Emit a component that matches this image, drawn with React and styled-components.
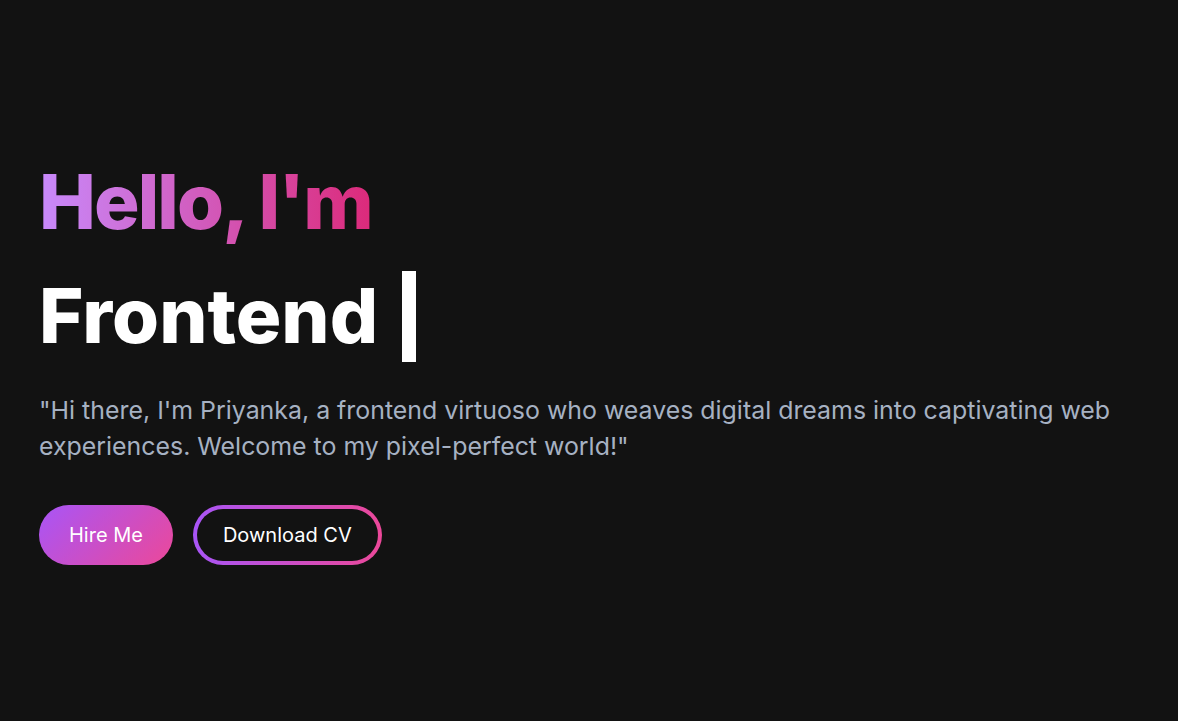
import React from 'react';
import styled, { createGlobalStyle } from 'styled-components';

const GlobalStyle = createGlobalStyle`
  * {
    box-sizing: border-box;
  }
  body {
    margin: 0;
    background: #121212;
    font-family: Inter, "Noto Sans", sans-serif;
  }
`;

const Hero = styled.section`
  min-height: 100vh;
  display: flex;
  flex-direction: column;
  justify-content: center;
  align-items: flex-start;
  padding: 0 39px;
  background: #121212;
`;

const Greeting = styled.h1`
  display: inline-block;
  margin: 0;
  font-size: 76px;
  font-weight: 800;
  letter-spacing: -0.025em;
  line-height: 1.2;
  background: linear-gradient(90deg, #c88afc, #dc2a7a);
  -webkit-background-clip: text;
  background-clip: text;
  color: transparent;
`;

const Role = styled.h2`
  display: flex;
  align-items: center;
  gap: 24px;
  margin: 21px 0 0;
  font-size: 76px;
  font-weight: 800;
  line-height: 1.2;
  color: #ffffff;
`;

/* typewriter caret */
const Cursor = styled.span`
  display: block;
  width: 14px;
  height: 91px;
  margin-top: 2px;
  background: #ffffff;
`;

const Intro = styled.p`
  margin: 30px 0 0;
  max-width: 1100px;
  font-size: 24.9px;
  line-height: 36px;
  color: #a6b1c2;
`;

const Actions = styled.div`
  display: flex;
  gap: 20px;
  margin-top: 41px;
`;

const PrimaryButton = styled.button`
  font-family: inherit;
  font-size: 20px;
  line-height: 28px;
  color: #ffffff;
  border: none;
  border-radius: 999px;
  padding: 16px 30px;
  cursor: pointer;
  background: linear-gradient(135deg, #a855f7, #ec4899);
`;

const OutlineButton = styled.button`
  font-family: inherit;
  font-size: 20px;
  line-height: 28px;
  color: #ffffff;
  border: 4px solid transparent;
  border-radius: 999px;
  padding: 12px 26px;
  cursor: pointer;
  background:
    linear-gradient(#121212, #121212) padding-box,
    linear-gradient(90deg, #a855f7, #ec4899) border-box;
`;

const App = () => {
  return (
    <>
      <GlobalStyle />
      <Hero>
        <Greeting>Hello, I'm</Greeting>
        <Role>
          <span>Frontend</span>
          <Cursor aria-hidden="true" />
        </Role>
        <Intro>
          "Hi there, I'm Priyanka, a frontend virtuoso who weaves digital dreams into captivating web
          experiences. Welcome to my pixel-perfect world!"
        </Intro>
        <Actions>
          <PrimaryButton>Hire Me</PrimaryButton>
          <OutlineButton>Download CV</OutlineButton>
        </Actions>
      </Hero>
    </>
  );
};

export default App;
